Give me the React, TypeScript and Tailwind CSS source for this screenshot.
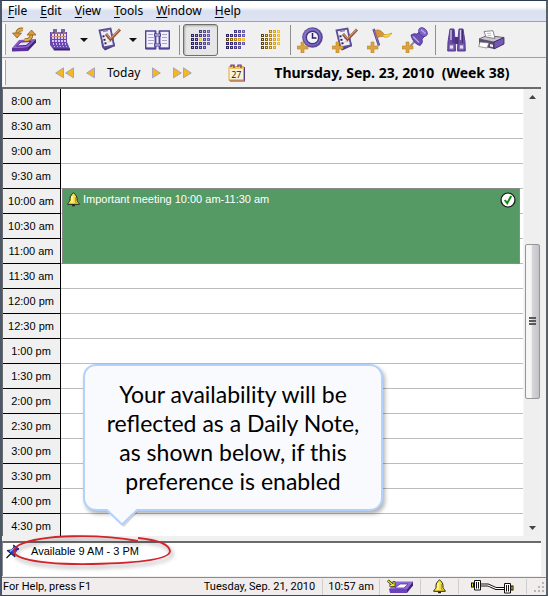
import React from "react";

const UI = "font-['Noto_Sans','Open_Sans',sans-serif]";

/* ---------- toolbar artwork ---------- */

function Plus() {
  return (
    <path d="M4 15h3v4h4v3H7v4H4v-4H0v-3h4z" fill="#dba43c" stroke="#b98532" strokeWidth=".6" />
  );
}

function SyncIcon() {
  return (
    <svg width="26" height="25" viewBox="0 0 26 25" aria-hidden="true">
      <path d="M8 13 25 12 17 20 1 21z" fill="#8a5bd0" />
      <path d="M1 21 17 20 17 24 1 24.5z" fill="#5b2f9d" />
      <path d="M17 20 25 12V15.500L17 24z" fill="#43217f" />
      <path d="M10 15 20 14.500 15 18.500 5.500 19z" fill="#e9e0fa" stroke="#4a2788" />
      <path d="M12 2.500C8 2 6 4 6 7" fill="none" stroke="#8d6128" strokeWidth="3.600" />
      <path d="M12 2.500C8 2 6 4 6 7" fill="none" stroke="#e6ae48" strokeWidth="2" />
      <path d="M1.500 6h9l-4.500 5z" fill="#d99b38" stroke="#8d6128" strokeWidth=".8" />
      <path d="M13.500 13C18 13.500 20.500 11 20.500 7.500" fill="none" stroke="#8d6128" strokeWidth="3.600" />
      <path d="M13.500 13C18 13.500 20.500 11 20.500 7.500" fill="none" stroke="#e6ae48" strokeWidth="2" />
      <path d="M16 8 20.500 3 25 8z" fill="#d99b38" stroke="#8d6128" strokeWidth=".8" />
    </svg>
  );
}

function CalendarIcon() {
  const cols = [0, 1, 2, 3, 4];
  return (
    <svg width="22" height="24" viewBox="0 0 22 24" aria-hidden="true">
      <path d="M1 4h17v10l3 7H4l-3-4z" fill="#6a48b4" />
      <path d="M4 20.500h17v2H5z" fill="#38246c" />
      <path d="M2 5h15M2 8.500h15" stroke="#cf9a72" strokeWidth=".9" />
      {cols.map((c) => (
        <g key={c} fill="#d6caf4" shapeRendering="crispEdges">
          <rect x={3 + c * 3} y="6" width="2" height="2" fill="#f3dfc8" />
          <rect x={3 + c * 3} y="9" width="2" height="2" />
          <rect x={3 + c * 3} y="12" width="2" height="2" />
          <rect x={4 + c * 3} y="15" width="1" height="2" fill="#cdbcf2" />
          <rect x={5 + c * 3} y="18" width="1" height="1" fill="#cdbcf2" />
        </g>
      ))}
      <path d="M5 1v4M7 1v3M13 1v4M15 1v3" stroke="#40307f" strokeWidth="1.400" />
    </svg>
  );
}

function NoteShape() {
  return (
    <>
      <path d="M3 4 14 1.500 18 19 8 23.500 5 20z" fill="#4b3d82" />
      <path d="M2.500 3.500 13.500 1.500 17 18.500 6.500 20.500z" fill="#f1eff9" stroke="#5d4f95" strokeWidth="1.800" />
      <path d="M6 4.500 11 3.500" stroke="#8c84b3" strokeWidth="1.500" />
      <path d="M5.500 9.500l2-.4M6.500 13l2-.4M7.500 16.500l2-.4" stroke="#272050" strokeWidth="1.800" />
      <path d="M10 11.500l3-.5M10.500 15l4-.7" stroke="#c3bedd" />
      <path d="M9 7 13.500 12.500 23 2.500" fill="none" stroke="#8d5135" strokeWidth="2.800" />
      <path d="M9 6.500 13.500 11.500 22.500 2.500" fill="none" stroke="#d49a70" strokeWidth="1.100" />
    </>
  );
}

function NoteIcon() {
  return (
    <svg width="24" height="25" viewBox="0 0 24 25" aria-hidden="true">
      <NoteShape />
    </svg>
  );
}

function BookIcon() {
  return (
    <svg width="25" height="20" viewBox="0 0 25 20" aria-hidden="true">
      <path d="M.7 1h9.800v17.500H.7zM14.500 1h9.800v17.500h-9.800z" fill="#f2f0fb" stroke="#4f4396" strokeWidth="1.400" />
      <path d="M1 18.500h10M14 18.500h10" stroke="#4f4396" strokeWidth="2" />
      <path d="M10.500 1v18M14.500 1v18" stroke="#4f4396" strokeWidth="1.600" />
      <path d="M9 5h7M9 15h7" stroke="#4f4396" strokeWidth="3" />
      <path d="M10 5h5M10 15h5" stroke="#e9e4fc" />
      <path d="M3 4.500h5M3 7.500h6M3 10.500h6M3 13.500h5M17 4.500h5M17 7.500h5M17 10.500h5M17 13.500h5" stroke="#aaa3cd" />
    </svg>
  );
}

type Tone = "day" | "week" | "month";
function DotsIcon({ tone }: { tone: Tone }) {
  const purple = ["#2c2367", "#352c72", "#443a85", "#56499c", "#685db0"];
  const gold = ["#5c4410", "#866312", "#b68313", "#dba41c", "#f2bd33"];
  const dots: React.ReactNode[] = [];
  for (let r = 0; r < 5; r++) {
    for (let c = 0; c < 5; c++) {
      if (r === 0 && c < 2) continue;
      if (r === 4 && c > 3) continue;
      const isGold =
        tone === "month" || (tone === "week" && r === 2) || (tone === "day" && r === 2 && c === 2);
      dots.push(
        <g key={`${r}-${c}`}>
          <rect x={c * 4} y={r * 4} width="3" height="3" fill={isGold ? gold[tone === "day" ? 4 : c] : purple[c]} />
          <rect x={c * 4 + 1} y={r * 4 + 1} width="1" height="1" fill={isGold ? "#ffe28a" : "#a9a2dc"} />
        </g>
      );
    }
  }
  return (
    <svg width="19" height="19" viewBox="0 0 19 19" shapeRendering="crispEdges" aria-hidden="true">
      {dots}
    </svg>
  );
}

function ClockIcon() {
  return (
    <svg width="26" height="26" viewBox="0 0 26 26" aria-hidden="true">
      <circle cx="15.500" cy="10.500" r="10.300" fill="#5a489d" />
      <circle cx="15" cy="10" r="8.800" fill="#8272c4" />
      <circle cx="15.500" cy="10.500" r="6.200" fill="#f5f3ff" stroke="#463680" strokeWidth="1.400" />
      <path d="M15.500 6v5h4" fill="none" stroke="#2a2052" strokeWidth="1.500" />
      <Plus />
    </svg>
  );
}

function NotePlusIcon() {
  return (
    <svg width="26" height="26" viewBox="0 0 26 26" aria-hidden="true">
      <g transform="translate(2 0)">
        <NoteShape />
      </g>
      <Plus />
    </svg>
  );
}

function FlagIcon() {
  return (
    <svg width="26" height="26" viewBox="0 0 26 26" aria-hidden="true">
      <path d="M6.500 2 12 18.500" stroke="#4e3a8c" strokeWidth="2.400" />
      <path d="M6.500 2 12 18.500" stroke="#9c87d0" strokeWidth=".8" />
      <path d="M8 3.500c4-1.500 6 0 9 3.500l1 2c-3 1-6-.5-7.500 2.500z" fill="#d9923a" stroke="#a9742f" strokeWidth=".7" />
      <path d="M15 7c4 1.500 7 0 10-1-2 3-4 5-8 4z" fill="#f7df2c" stroke="#c5972a" strokeWidth=".7" />
      <Plus />
    </svg>
  );
}

function PinIcon() {
  return (
    <svg width="26" height="26" viewBox="0 0 26 26" aria-hidden="true">
      <path d="M14 13 8.500 19" stroke="#8f8da0" strokeWidth="2" />
      <path d="M9 8c3-2 5-1 6-1l3-3 5 5-3 3c1 3 0 5-2 6.500-4-1-8-5-9-10.500z" fill="#6a4fb5" stroke="#45308a" strokeWidth=".8" />
      <ellipse cx="21" cy="5" rx="5" ry="3.600" transform="rotate(45 21 5)" fill="#8065c6" stroke="#4a358f" strokeWidth=".8" />
      <path d="M19 2.500l4.500 4M11 9.500l6 6" stroke="#b7a5ec" strokeWidth="1.500" />
      <Plus />
    </svg>
  );
}

function BinocularsIcon() {
  return (
    <svg width="19" height="24" viewBox="0 0 19 24" aria-hidden="true">
      <path d="M3 1h4l1 10 .5 12H.700L1 14zM12 1h4l2 13 .3 9h-7.800L11 11z" fill="#6b50a5" stroke="#5b3d99" />
      <path d="M7.500 9h4v7h-4z" fill="#4b317f" />
      <path d="M4 2v10M13.500 2v10" stroke="#d7cbee" strokeWidth="1.200" />
      <path d="M2.500 17h4v4h-4zM12.500 17h4v4h-4z" fill="#e6ddf5" stroke="#8c73bd" />
      <path d="M6 2v13M15.500 2v13" stroke="#3e286f" />
    </svg>
  );
}

function PrinterIcon() {
  return (
    <svg width="27" height="20" viewBox="0 0 27 20" aria-hidden="true">
      <path d="M1 9 9 5.500 26 7.500V14L16 19 1 15.500z" fill="#5b4b75" />
      <path d="M1 9 9 5.500 26 7.500 16 12z" fill="#c9c6cf" stroke="#55505f" strokeWidth=".8" />
      <path d="M16 12 26 7.500V14L16 19z" fill="#7658b8" stroke="#332a55" strokeWidth=".8" />
      <path d="M8 7 6 1.500 15 .700 17 8.500z" fill="#fff" stroke="#6b6873" strokeWidth=".8" />
      <path d="M2 12 11 13 9 18 .700 16.500z" fill="#fff" stroke="#77737c" strokeWidth=".7" />
      <path d="M12 14l3 .7v2.500l-3-.7z" fill="#eee" />
      <path d="M9 3.500l4-.3M9.500 5.500l4-.3" stroke="#bdbac2" />
    </svg>
  );
}

/* ---------- small artwork ---------- */

function Triangles({ dir, double }: { dir: "left" | "right"; double?: boolean }) {
  const tri = (x: number) => (
    <path
      key={x}
      d={dir === "left" ? `M${x + 8.5} .800v10L${x + 0.7} 6z` : `M${x + 0.5} .800v10L${x + 8.3} 6z`}
      fill="#f8b81c"
      stroke="#a9a4b5"
      strokeWidth="1"
    />
  );
  return (
    <svg width={double ? 19 : 9} height="12" viewBox={double ? "0 0 19 12" : "0 0 9 12"} aria-hidden="true">
      {tri(0)}
      {double && tri(10)}
    </svg>
  );
}

function BellIcon() {
  return (
    <svg width="13" height="15" viewBox="0 0 13 15" aria-hidden="true">
      <path d="M6.500 1C5.500 1 5.300 2 5 2.500 3 3.500 3 6 3 8.500 2.500 10 .7 11 .7 12.300h11.600C12.300 11 10.500 10 10 8.500 10 6 10 3.500 8 2.500 7.700 2 7.500 1 6.500 1z" fill="#f6e43c" stroke="#222" strokeWidth="1" />
      <path d="M5 4v6.500" stroke="#fffcc8" strokeWidth="1.300" />
      <path d="M8.500 5v5l2 1.500" fill="none" stroke="#c79a15" strokeWidth="1.200" />
      <path d="M5 13.500h3" stroke="#222" strokeWidth="1.500" />
    </svg>
  );
}

function CheckBadge() {
  return (
    <svg width="16" height="16" viewBox="0 0 16 16" aria-hidden="true">
      <circle cx="8" cy="8" r="7" fill="#fff" stroke="#111" strokeWidth="1.200" />
      <path d="M4.700 8 7.200 11.200 11.200 4" fill="none" stroke="#118a11" strokeWidth="2" />
    </svg>
  );
}

function DateIcon() {
  return (
    <svg width="18" height="18" viewBox="0 0 18 18" aria-hidden="true">
      <path d="M2 3h15v14.500H2z" fill="#5b3a86" />
      <path d="M1 2.500h14.500v14H1z" fill="#fbf3d6" stroke="#e2ab35" />
      <path d="M1 3h14.500v2H1z" fill="#f0c75f" />
      <path d="M1 15.500h14.500l1 1.500H2z" fill="#c08a5c" />
      <path d="M3 3V1.200h3V4M10 3V1.200h3V4" fill="none" stroke="#6a3a9b" strokeWidth="1.300" />
      <text x="8.300" y="13.500" textAnchor="middle" fontSize="9" fontFamily="Open Sans, sans-serif" fill="#111">27</text>
    </svg>
  );
}

function NotePinIcon() {
  return (
    <svg width="14" height="15" viewBox="0 0 14 15" aria-hidden="true">
      <path d="M.5 14 5 9.500" stroke="#111" strokeWidth="1.300" />
      <path d="M1 6.500 5 6l3-3-.5-2 5.500 4-2 1-2.500 3 .5 4z" fill="#2a35d8" stroke="#101040" strokeWidth=".9" />
      <path d="M4 7.500 9 3.500" stroke="#5fd4ee" strokeWidth="1.500" />
      <path d="M7.500 10 10.500 6.500" stroke="#8a3bc8" strokeWidth="1.300" />
    </svg>
  );
}

function TrayIcon() {
  return (
    <svg width="27" height="15" viewBox="0 0 27 15" aria-hidden="true">
      <path d="M9 2.500 26 2.500 20 10 2 10z" fill="#8e68d6" />
      <path d="M2 10h18v4H3z" fill="#6b42b8" />
      <path d="M20 10 26 2.500v4L20 14z" fill="#41237f" />
      <path d="M13 5h8l-4 4H8z" fill="#fff" stroke="#5b34a5" strokeWidth=".8" />
      <path d="M.8 1.500 5.500 5.500M7 2V6.500H2.500" fill="none" stroke="#111" strokeWidth="2.600" />
      <path d="M1 1.700 6 6M7 2.500V6.500H3" fill="none" stroke="#f5ee27" strokeWidth="1.300" />
    </svg>
  );
}

function PlugIcon() {
  return (
    <svg width="43" height="15" viewBox="0 0 43 15" aria-hidden="true">
      <path d="M1.500 3.500v5" stroke="#111" strokeWidth="3" />
      <path d="M1.500 4.500v3" stroke="#f0e025" />
      <path d="M3.500 1.500h6v9.500h-6z" fill="#fff" stroke="#111" />
      <path d="M5.500 3v6.500M7.500 3v6.500" stroke="#111" />
      <path d="M10 6h7l8 3.500h8" fill="none" stroke="#111" strokeWidth="3" />
      <path d="M10 6h7l8 3.500h8" fill="none" stroke="#fff" strokeWidth="1.200" />
      <path d="M41 6.500v5" stroke="#111" strokeWidth="3" />
      <path d="M41 7.500v3" stroke="#f0e025" />
      <path d="M33.500 4.500h6v9.500h-6z" fill="#fff" stroke="#111" />
      <path d="M35.500 6v6.500M37.500 6v6.500" stroke="#111" />
    </svg>
  );
}

function ResizeGrip() {
  const spots = [[8, 0], [4, 4], [8, 4], [0, 8], [4, 8], [8, 8]];
  return (
    <svg width="10" height="10" viewBox="0 0 10 10" shapeRendering="crispEdges" aria-hidden="true">
      {spots.map(([x, y]) => (
        <rect key={`${x}${y}`} x={x} y={y} width="2" height="2" fill="#b9b6b6" />
      ))}
    </svg>
  );
}

/* ---------- pieces ---------- */

const menus = ["File", "Edit", "View", "Tools", "Window", "Help"];

function ToolButton({ label, pressed, children }: { label: string; pressed?: boolean; children: React.ReactNode }) {
  return (
    <button
      type="button"
      aria-label={label}
      aria-pressed={pressed}
      className={
        "flex h-8 w-[35px] shrink-0 items-center justify-center " +
        (pressed ? "rounded-[3px] border border-[#6e6e6e] bg-[#e6e6e6] shadow-[inset_1px_1px_2px_#a8a8a8]" : "")
      }
    >
      {children}
    </button>
  );
}

function DropArrow({ label }: { label: string }) {
  return (
    <button type="button" aria-label={label} className="flex h-8 w-3 shrink-0 items-center justify-center">
      <svg width="8" height="4" viewBox="0 0 8 4" aria-hidden="true">
        <path d="M0 0h8L4 4z" fill="#111" />
      </svg>
    </button>
  );
}

function Divider() {
  return <div className="mx-[3px] h-[30px] w-px shrink-0 bg-[#8f8f8f]" />;
}

function Grip() {
  return <div className="h-full w-[3px] shrink-0 border-r border-[#a3a3a3] bg-white" />;
}

const times = [
  "8:00 am", "8:30 am", "9:00 am", "9:30 am", "10:00 am", "10:30 am",
  "11:00 am", "11:30 am", "12:00 pm", "12:30 pm", "1:00 pm", "1:30 pm",
  "2:00 pm", "2:30 pm", "3:00 pm", "3:30 pm", "4:00 pm", "4:30 pm",
];

function Callout() {
  return (
    <div className="absolute top-[275px] left-20 w-[300px] rounded-[13px] border-2 border-[#b3d2fb] bg-[#f9fafd] pt-[14px] pb-[13px] text-center font-['Lato','Open_Sans',sans-serif] text-[23px] leading-[29px] whitespace-nowrap text-black shadow-[2px_3px_4px_rgba(0,0,0,0.3)]">
      Your availability will be
      <br />
      reflected as a Daily Note,
      <br />
      as shown below, if this
      <br />
      preference is enabled
      <svg className="absolute top-full left-5 overflow-visible" width="34" height="18" viewBox="0 0 34 18" aria-hidden="true">
        <path d="M5 3 19 18 33 3z" fill="#000" opacity=".16" />
        <path d="M2 -1h30v3L17 16 2 2z" fill="#f9fafd" />
        <path d="M0 1h2L17 15.500 32 1h2" fill="none" stroke="#b3d2fb" strokeWidth="2" />
      </svg>
    </div>
  );
}

function Schedule() {
  return (
    <section aria-label="Day schedule" className="relative mr-[5px] flex min-h-0 flex-1 border-t-2 border-l border-[#6b6b6b] bg-white">
      <div className="min-w-0 flex-1 overflow-hidden">
        {times.map((t) => (
          <div key={t} className="flex h-[25px]">
            <div className="flex w-[58px] items-center justify-center border-r border-b border-black bg-[#f0f0f0] pr-px font-['Liberation_Sans',Arial,sans-serif] text-[11px] text-black">
              {t}
            </div>
            <div className="flex-1 border-b border-[#bcbcbc]" />
          </div>
        ))}
      </div>

      <article className="absolute top-[99px] right-[21px] left-[59px] flex h-[76px] items-start justify-between border border-[#8a8a8a] bg-[#559a65] pt-[3px] pr-[3px] pl-[4px]">
        <div className="flex items-center gap-[3px] font-['Liberation_Sans',Arial,sans-serif] text-[11px] leading-[15px] text-white">
          <BellIcon />
          <span>Important meeting 10:00 am-11:30 am</span>
        </div>
        <CheckBadge />
      </article>

      <div className="flex w-[18px] shrink-0 flex-col items-center border-l border-[#f6f6f6] bg-[#efefef]">
        <button type="button" aria-label="Scroll up" className="flex h-4 w-full items-center justify-center">
          <svg width="7" height="4" viewBox="0 0 7 4" aria-hidden="true"><path d="M0 4h7L3.500 0z" fill="#444" /></svg>
        </button>
        <div className="flex-[140_1_0%]" />
        <div className="flex w-[15px] flex-[154_1_0%] flex-col items-center justify-center gap-px rounded-[2px] border border-[#979797] bg-linear-to-r from-[#f6f6f6] from-40% via-[#d5d5d9] via-50% to-[#c3c3c8]">
          <div className="h-[2px] w-[7px] bg-[#5a5a5a]" />
          <div className="h-[2px] w-[7px] bg-[#5a5a5a]" />
          <div className="h-[2px] w-[7px] bg-[#5a5a5a]" />
        </div>
        <div className="flex-[122_1_0%]" />
        <button type="button" aria-label="Scroll down" className="flex h-4 w-full items-center justify-center">
          <svg width="7" height="4" viewBox="0 0 7 4" aria-hidden="true"><path d="M0 0h7L3.500 4z" fill="#444" /></svg>
        </button>
      </div>

      <Callout />
    </section>
  );
}

export default function App() {
  return (
    <div className={`flex h-screen flex-col overflow-hidden border-t border-r-2 border-b border-l-2 border-t-[#2c3b4f] border-r-[#5a6267] border-b-[#3c4650] border-l-[#4a5768] bg-[#f0f0f0] text-black ${UI}`}>
      <nav className="flex h-5 shrink-0 items-center bg-linear-to-b from-white from-30% via-[#d9e0f0] via-50% to-[#dfe4f2] pl-[6px] text-[12px]">
        {menus.map((m) => (
          <button key={m} type="button" className="mr-[13px] leading-[18px]">
            <span className="underline underline-offset-2">{m[0]}</span>
            {m.slice(1)}
          </button>
        ))}
      </nav>

      <div role="toolbar" className="flex h-9 shrink-0 items-center border-t border-[#a0a0a0] py-0.5 pl-px">
        <Grip />
        <div className="flex items-center gap-px pr-px">
          <ToolButton label="Synchronize"><SyncIcon /></ToolButton>
          <ToolButton label="Calendar"><CalendarIcon /></ToolButton>
          <DropArrow label="Calendar options" />
          <ToolButton label="Tasks"><NoteIcon /></ToolButton>
          <DropArrow label="Task options" />
          <ToolButton label="Contacts"><BookIcon /></ToolButton>
        </div>
        <Divider />
        <ToolButton label="Day view" pressed><DotsIcon tone="day" /></ToolButton>
        <ToolButton label="Week view"><DotsIcon tone="week" /></ToolButton>
        <ToolButton label="Month view"><DotsIcon tone="month" /></ToolButton>
        <div className="mr-px ml-[2px] h-[30px] w-px shrink-0 bg-[#8f8f8f]" />
        <ToolButton label="New appointment"><ClockIcon /></ToolButton>
        <ToolButton label="New task"><NotePlusIcon /></ToolButton>
        <ToolButton label="New event"><FlagIcon /></ToolButton>
        <ToolButton label="New daily note"><PinIcon /></ToolButton>
        <Divider />
        <ToolButton label="Find"><BinocularsIcon /></ToolButton>
        <ToolButton label="Print"><PrinterIcon /></ToolButton>
      </div>

      <div className="flex h-[30px] shrink-0 items-center border-t border-[#a0a0a0] py-0.5 pl-px text-[12px]">
        <Grip />
        <div className="flex flex-1 items-center gap-3 pl-[49px]">
          <button type="button" aria-label="Previous week"><Triangles dir="left" double /></button>
          <button type="button" aria-label="Previous day"><Triangles dir="left" /></button>
          <button type="button">Today</button>
          <button type="button" aria-label="Next day"><Triangles dir="right" /></button>
          <button type="button" aria-label="Next week"><Triangles dir="right" double /></button>
          <button type="button" aria-label="Pick a date" className="ml-6"><DateIcon /></button>
          <h1 className="ml-4 text-[14px] font-bold whitespace-pre">Thursday, Sep. 23, 2010  (Week 38)</h1>
        </div>
      </div>

      <Schedule />

      <section aria-label="Daily notes" className="relative mt-[5px] mr-[5px] flex h-[35px] shrink-0 items-start gap-[11px] border-t-2 border-l border-t-[#6b6b6b] border-l-[#8b8b8b] bg-white pt-px pl-[3px]">
        <NotePinIcon />
        <p className="font-['Liberation_Sans',Arial,sans-serif] text-[11px] leading-[14px]">Available 9 AM - 3 PM</p>
        <svg className="absolute -top-2 left-[9px] overflow-visible drop-shadow-[2px_3px_2px_rgba(0,0,0,0.4)]" width="162" height="32" viewBox="0 0 162 32" aria-hidden="true">
          <path d="M126 6C88-1 30-1 7 10-10 20 14 30 80 29 130 28 158 24 158 16 157 9 146 5 126 3" fill="none" stroke="#d2232a" strokeWidth="1.800" />
        </svg>
      </section>

      <footer className="mt-px flex h-[18px] shrink-0 items-center border-t border-[#8b8b8b] bg-[#f0edec] font-['Roboto',sans-serif] text-[11px] leading-[16px]">
        <span className="flex-1 pl-px">For Help, press F1</span>
        <span className="border-r border-[#d0cecd] px-[7px]">Tuesday, Sep. 21, 2010</span>
        <span className="border-r border-[#d0cecd] px-[5px]">10:57 am</span>
        <span className="flex w-[41px] justify-center border-r border-[#d0cecd]"><TrayIcon /></span>
        <span className="flex w-[38px] justify-center border-r border-[#d0cecd]"><BellIcon /></span>
        <span className="flex w-[68px] justify-center border-r border-[#d0cecd]"><PlugIcon /></span>
        <span className="flex w-[19px] items-end justify-end pr-0.5"><ResizeGrip /></span>
      </footer>
    </div>
  );
}
